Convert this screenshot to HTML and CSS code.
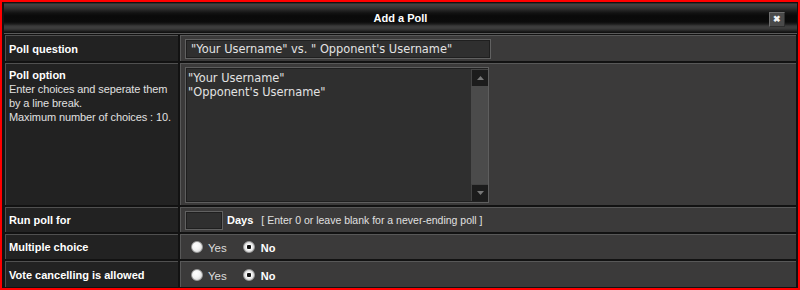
FILE: index.html
```html
<!DOCTYPE html>
<html lang="en">

<head>
    <meta charset="UTF-8">
    <title>Add a Poll</title>
    <link rel="stylesheet" href="styles.css">
</head>

<body>
<div class="poll">
    <div class="poll-head">
        <span class="poll-title">Add a Poll</span>
        <span class="poll-close">&#10006;</span>
    </div>

    <div class="poll-form">
        <div class="lbl">Poll question</div>
        <div class="fld">
            <input type="text" class="txt txt-question" value="&quot;Your Username&quot; vs. &quot; Opponent's Username&quot;">
        </div>

        <div class="lbl lbl-top">
            Poll option
            <p class="hint">Enter choices and seperate them by a line break.<br>Maximum number of choices : 10.</p>
        </div>
        <div class="fld fld-top">
            <div class="area">
                <textarea class="area-text">"Your Username"
"Opponent's Username"</textarea>
                <div class="bar">
                    <span class="bar-btn"><svg width="7" height="4" viewBox="0 0 7 4"><path d="M0 4 L3.5 0 L7 4 Z" fill="#777"/></svg></span>
                    <span class="bar-track"></span>
                    <span class="bar-btn"><svg width="7" height="4" viewBox="0 0 7 4"><path d="M0 0 L3.5 4 L7 0 Z" fill="#777"/></svg></span>
                </div>
            </div>
        </div>

        <div class="lbl">Run poll for</div>
        <div class="fld">
            <input type="text" class="txt txt-days" value="">
            <b class="days">Days</b>
            <span class="note">[ Enter 0 or leave blank for a never-ending poll ]</span>
        </div>

        <div class="lbl">Multiple choice</div>
        <div class="fld">
            <label class="opt"><input type="radio" name="multi"> Yes</label>
            <label class="opt on"><input type="radio" name="multi" checked> No</label>
        </div>

        <div class="lbl">Vote cancelling is allowed</div>
        <div class="fld">
            <label class="opt"><input type="radio" name="cancel"> Yes</label>
            <label class="opt on"><input type="radio" name="cancel" checked> No</label>
        </div>
    </div>
</div>
</body>

</html>
```

FILE: styles.css
```css
* {
    margin: 0;
    padding: 0;
    box-sizing: border-box;
}

body {
    background: #111;
    font-family: "Liberation Sans", Arial, sans-serif;
    font-size: 11px;
    color: #fff;
}

.poll {
    width: 800px;
    height: 290px;
    border: 2px solid #ff0000;
    background: #121212;
    padding: 1px 2px 0 3px;
}

/* title bar */
.poll-head {
    height: 31px;
    margin: 0 -1px 1px -1px;
    display: flex;
    align-items: center;
    justify-content: center;
    position: relative;
    border-bottom: 1px solid #5a5a5a;
    background: linear-gradient(to bottom,
        #1a1a1a 0, #444 1px, #3c3c3c 3px, #333 5px, #262626 7px,
        #121212 10px, #0a0a0a 13px, #0b0b0b 19px, #1c1c1c 21px,
        #3a3a3a 23px, #3e3e3e 25px, #2e2e2e 27px, #141414 29px, #0e0e0e 30px);
}

.poll-title {
    font-weight: bold;
    font-size: 11px;
    color: #fff;
    margin-top: 0;
}

.poll-close {
    position: absolute;
    right: 12px;
    top: 9px;
    width: 16px;
    height: 15px;
    background: #4a4a4a;
    border: 1px solid #6e6e6e;
    border-right-color: #2e2e2e;
    border-bottom-color: #2e2e2e;
    color: #f2f2f2;
    font-size: 9px;
    font-weight: bold;
    line-height: 13px;
    text-align: center;
}

/* form grid */
.poll-form {
    display: grid;
    grid-template-columns: 173px 1fr;
    grid-template-rows: 26px 142px 25px 25px 26px;
    gap: 2px;
}

.lbl {
    background: #222;
    border-top: 1px solid #505050;
    border-left: 1px solid #505050;
    padding-left: 3px;
    font-weight: bold;
    display: flex;
    align-items: center;
}

.lbl-top {
    display: block;
    padding-top: 4px;
    line-height: 14px;
}

.hint {
    font-weight: normal;
    color: #e0e0e0;
    letter-spacing: -0.1px;
}

.fld {
    background: #3b3a3a;
    border-top: 1px solid #585858;
    border-left: 1px solid #585858;
    padding-left: 4px;
    display: flex;
    align-items: center;
}

.fld-top {
    align-items: flex-start;
    padding-top: 3px;
}

.txt {
    height: 20px;
    background: #2f2f2f;
    border: 1px solid #616161;
    box-shadow: inset 0 0 0 1px #1f1f1f;
    color: #e2e2e2;
    font-family: "DejaVu Sans", Verdana, sans-serif;
    font-size: 11.4px;
    padding: 1px 5px 0;
    outline: none;
}

.txt-question {
    width: 306px;
}

.txt-days {
    width: 38px;
    height: 19px;
    margin-top: 1px;
}

.days {
    margin-left: 4px;
    font-size: 11px;
}

.note {
    margin-left: 8px;
    font-size: 10.5px;
    color: #e0e0e0;
}

/* textarea with dark scrollbar */
.area {
    width: 304px;
    height: 136px;
    display: flex;
    border: 1px solid #5e5e5e;
    background: #2f2f2f;
    box-shadow: inset 0 0 0 1px #1f1f1f;
}

.area-text {
    flex: 1;
    background: transparent;
    border: none;
    resize: none;
    outline: none;
    color: #e2e2e2;
    font-family: "DejaVu Sans", Verdana, sans-serif;
    font-size: 11.4px;
    line-height: 14px;
    padding: 3px 2px;
    overflow: hidden;
}

.bar {
    width: 17px;
    display: flex;
    flex-direction: column;
    background: #4b4b4b;
    margin: 1px 0 1px 0;
}

.bar-btn {
    height: 17px;
    background: #1c1c1c;
    border-top: 1px solid #444;
    border-left: 1px solid #444;
    display: flex;
    align-items: center;
    justify-content: center;
}

.bar-track {
    flex: 1;
}

/* radios */
.opt {
    display: flex;
    align-items: center;
    margin: 2px 16px 0 6px;
    color: #ddd;
    font-size: 11.5px;
}

.opt + .opt {
    margin-left: 0;
}

.opt.on {
    font-weight: bold;
    font-size: 11px;
    color: #fff;
}

.opt input {
    appearance: none;
    -webkit-appearance: none;
    width: 12px;
    height: 12px;
    margin: 0 5px 0 0;
    border-radius: 50%;
    border: 1px solid #9a9a9a;
    background: radial-gradient(circle at 40% 35%, #fff 0, #f4f4f4 45%, #c8c8c8 100%);
    position: relative;
    top: -1px;
}

.opt.on input {
    margin-right: 6px;
}

.opt input:checked {
    background: radial-gradient(circle, #111 0, #111 2px, #fff 2.5px, #eee 45%, #c4c4c4 100%);
}
```
